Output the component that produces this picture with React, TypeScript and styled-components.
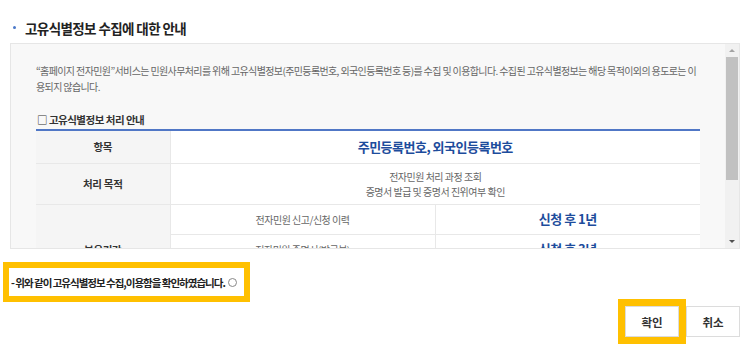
import React, { useState } from "react";
import styled, { createGlobalStyle } from "styled-components";

const GlobalStyle = createGlobalStyle`
  html, body {
    margin: 0;
    padding: 0;
    background: #ffffff;
  }
  body {
    font-family: "Noto Sans CJK KR", "Noto Sans", sans-serif;
    color: #333;
  }
  * {
    box-sizing: border-box;
  }
`;

interface PeriodRow {
  label: string;
  period: string;
}

// Retention periods shown under 보유기간
const periods: PeriodRow[] = [
  { label: "전자민원 신고/신청 이력", period: "신청 후 1년" },
  { label: "전자민원 증명서(발급분)", period: "신청 후 3년" },
  { label: "전자민원 진위확인 이력", period: "신청 후 5년" },
];

/**
 * Notice page about collecting unique identification info
 */
const App = () => {
  // Consent check status
  const [agreed, setAgreed] = useState<boolean>(false);

  return (
    <>
      <GlobalStyle />
      <StyledPage>
        {/* Start title */}
        <StyledTitle>
          <StyledBullet />
          고유식별정보 수집에 대한 안내
        </StyledTitle>
        {/* End title */}

        {/* Start scroll box */}
        <StyledScrollBox>
          <StyledScrollContent>
            <StyledIntro>
              “홈페이지 전자민원”서비스는 민원사무처리를 위해 고유식별정보(주민등록번호, 외국인등록번호 등)를 수집 및 이용합니다. 수집된
              고유식별정보는 해당 목적이외의 용도로는 이용되지 않습니다.
            </StyledIntro>

            <StyledSubTitle>□ 고유식별정보 처리 안내</StyledSubTitle>

            <StyledTable>
              <tbody>
                <StyledRow height={33}>
                  <StyledHead>항목</StyledHead>
                  <StyledCell colSpan={2}>
                    <StyledStrong>주민등록번호, 외국인등록번호</StyledStrong>
                  </StyledCell>
                </StyledRow>
                <StyledRow height={41}>
                  <StyledHead>처리 목적</StyledHead>
                  <StyledCell colSpan={2}>
                    전자민원 처리 과정 조회
                    <br />
                    증명서 발급 및 증명서 진위여부 확인
                  </StyledCell>
                </StyledRow>
                {periods.map((row, index) => (
                  <StyledRow height={30} key={row.label}>
                    {index === 0 && (
                      <StyledHead rowSpan={periods.length}>보유기간</StyledHead>
                    )}
                    <StyledCell>{row.label}</StyledCell>
                    <StyledCell>
                      <StyledStrong>{row.period}</StyledStrong>
                    </StyledCell>
                  </StyledRow>
                ))}
              </tbody>
            </StyledTable>
          </StyledScrollContent>

          {/* Start scrollbar */}
          <StyledScrollbar>
            <StyledArrowButton>
              <StyledArrow direction="up" />
            </StyledArrowButton>
            <StyledTrack>
              <StyledThumb size={123} />
            </StyledTrack>
            <StyledArrowButton>
              <StyledArrow direction="down" />
            </StyledArrowButton>
          </StyledScrollbar>
          {/* End scrollbar */}
        </StyledScrollBox>
        {/* End scroll box */}

        {/* Start consent */}
        <StyledConsent>
          <StyledConsentLabel>
            - 위와 같이 고유식별정보 수집,이용함을 확인하였습니다.
            <StyledRadio
              type="radio"
              checked={agreed}
              onChange={() => setAgreed(true)}
            />
          </StyledConsentLabel>
        </StyledConsent>
        {/* End consent */}

        {/* Start buttons */}
        <StyledButtonRow>
          <StyledHighlight>
            <StyledButton>확인</StyledButton>
          </StyledHighlight>
          <StyledButton>취소</StyledButton>
        </StyledButtonRow>
        {/* End buttons */}
      </StyledPage>
    </>
  );
};

export default App;

// ========= Start Styled Elements ==========
const StyledPage = styled.div`
  width: 750px;
  height: 359px;
  padding: 18px 10px 0 10px;
  overflow: hidden;
`;

const StyledTitle = styled.h2`
  display: flex;
  align-items: center;
  gap: 9px;
  margin: 0;
  padding-left: 3px;
  height: 19px;
  font-size: 13.5px;
  font-weight: 700;
  color: #222;
  letter-spacing: -0.6px;
`;

const StyledBullet = styled.span`
  width: 3px;
  height: 3px;
  border-radius: 50%;
  background: #4a78c9;
`;

const StyledScrollBox = styled.div`
  display: flex;
  margin-top: 6px;
  width: 730px;
  height: 206px;
  border: 1px solid #e6e6e6;
  background: #f8f8f8;
`;

const StyledScrollContent = styled.div`
  flex: 1;
  min-width: 0;
  overflow: hidden;
  padding: 19px 25px 0 25px;
`;

const StyledScrollbar = styled.div`
  width: 14px;
  display: flex;
  flex-direction: column;
  background: #f1f1f1;
`;

const StyledArrowButton = styled.div`
  height: 13px;
  display: flex;
  align-items: center;
  justify-content: center;
`;

const StyledArrow = styled.span<{ direction: "up" | "down" }>`
  width: 0;
  height: 0;
  border-left: 3px solid transparent;
  border-right: 3px solid transparent;
  ${(props) =>
    props.direction === "up"
      ? "border-bottom: 3px solid #a3a3a3;"
      : "border-top: 3px solid #505050;"}
`;

const StyledTrack = styled.div`
  flex: 1;
  padding: 0 1px;
`;

const StyledThumb = styled.div<{ size: number }>`
  height: ${(props) => props.size}px;
  background: #c1c1c1;
`;

const StyledIntro = styled.p`
  margin: 0;
  font-size: 10px;
  line-height: 16px;
  color: #666;
  letter-spacing: -0.62px;
`;

const StyledSubTitle = styled.div`
  margin-top: 17px;
  font-size: 10.5px;
  line-height: 16px;
  font-weight: 700;
  color: #333;
  padding-left: 1px;
  letter-spacing: -0.5px;
`;

const StyledTable = styled.table`
  width: 100%;
  margin-top: 1px;
  border-collapse: collapse;
  border-top: 2px solid #5077c6;
  table-layout: fixed;
`;

const StyledRow = styled.tr<{ height: number }>`
  height: ${(props) => props.height}px;
`;

const StyledHead = styled.th`
  width: 134px;
  background: #f5f5f5;
  font-size: 10.5px;
  font-weight: 700;
  color: #333;
  border-bottom: 1px solid #e8e8e8;
  padding: 0;
  letter-spacing: -0.3px;
`;

const StyledCell = styled.td`
  background: #ffffff;
  text-align: center;
  font-size: 10px;
  line-height: 15px;
  color: #666;
  border-bottom: 1px solid #e8e8e8;
  border-left: 1px solid #e8e8e8;
  padding: 0;
  letter-spacing: -0.5px;
`;

const StyledStrong = styled.strong`
  font-size: 13px;
  font-weight: 700;
  color: #1d4c9c;
  letter-spacing: -0.5px;
`;

const StyledConsent = styled.div`
  margin: 13px 0 0 -7px;
  width: 247px;
  height: 40px;
  border: 6px solid #ffc000;
  background: #ffffff;
  display: flex;
  align-items: center;
  padding-left: 2px;
`;

const StyledConsentLabel = styled.label`
  display: flex;
  align-items: center;
  gap: 3px;
  font-size: 10.5px;
  font-weight: 700;
  color: #222;
  letter-spacing: -1px;
  white-space: nowrap;
`;

const StyledRadio = styled.input`
  appearance: none;
  margin: 0;
  width: 9px;
  height: 9px;
  border: 1px solid #888;
  border-radius: 50%;
  background: #fff;
`;

const StyledButtonRow = styled.div`
  display: flex;
  justify-content: flex-end;
  align-items: center;
  margin-top: -3px;
`;

const StyledHighlight = styled.div`
  border: 7px solid #ffc000;
  display: flex;
`;

const StyledButton = styled.button`
  width: 54px;
  height: 31px;
  border: 1px solid #dcdcdc;
  background: #ffffff;
  font-family: "Noto Sans CJK KR", "Noto Sans", sans-serif;
  font-size: 11.5px;
  font-weight: 700;
  color: #333;
  padding: 0;
  cursor: pointer;
`;
// ========= End Styled Elements ==========
